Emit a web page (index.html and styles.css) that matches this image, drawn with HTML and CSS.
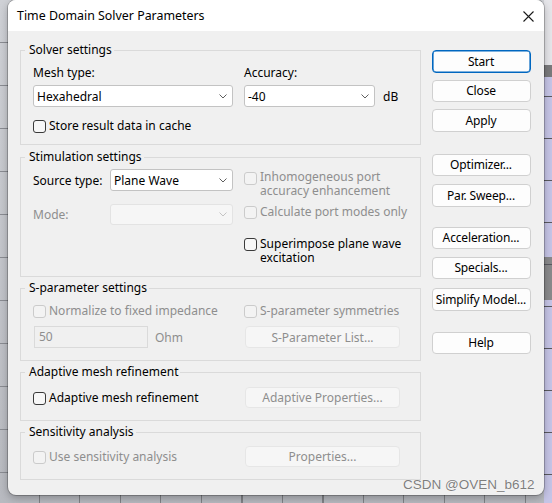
FILE: index.html
```html
<!DOCTYPE html>
<html>
<head>
<meta charset="utf-8">
<title>Time Domain Solver Parameters</title>
<link rel="stylesheet" href="styles.css">
</head>
<body>
<div class="desk">
  <div class="dialog">
    <div class="titlebar">
      <span class="title">Time Domain Solver Parameters</span>
      <svg class="close-x" width="11" height="11" viewBox="0 0 11 11"><path d="M0.5 0.5 L10.5 10.5 M10.5 0.5 L0.5 10.5" stroke="#1a1a1a" stroke-width="1.1" fill="none"/></svg>
    </div>
    <div class="body">
      <div class="groups">
        <section class="group g-solver">
          <div class="gtitle">Solver settings</div>
          <div class="row r-labels"><span class="col1">Mesh type:</span><span>Accuracy:</span></div>
          <div class="row r-combos">
            <div class="col1"><div class="combo w-mesh"><span>Hexahedral</span><svg class="chev" width="8" height="5" viewBox="0 0 8 5"><path d="M0.5 0.5 L4 4 L7.5 0.5" stroke="#5f5f5f" stroke-width="1" fill="none"/></svg></div></div>
            <div class="combo w-acc"><span>-40</span><svg class="chev" width="8" height="5" viewBox="0 0 8 5"><path d="M0.5 0.5 L4 4 L7.5 0.5" stroke="#5f5f5f" stroke-width="1" fill="none"/></svg></div>
            <span class="unit">dB</span>
          </div>
          <div class="check r-cache"><span class="box"></span><span>Store result data in cache</span></div>
        </section>

        <section class="group g-stim">
          <div class="gtitle">Stimulation settings</div>
          <div class="cols">
            <div class="col1">
              <div class="row r-src"><span class="lbl-src">Source type:</span><div class="combo w-src"><span>Plane Wave</span><svg class="chev" width="8" height="5" viewBox="0 0 8 5"><path d="M0.5 0.5 L4 4 L7.5 0.5" stroke="#5f5f5f" stroke-width="1" fill="none"/></svg></div></div>
              <div class="row r-mode"><span class="lbl-src dis">Mode:</span><div class="combo w-src combo-dis"><span></span><svg class="chev" width="8" height="5" viewBox="0 0 8 5"><path d="M0.5 0.5 L4 4 L7.5 0.5" stroke="#c4c4c4" stroke-width="1" fill="none"/></svg></div></div>
            </div>
            <div class="col2">
              <div class="check dis c-inho"><span class="box"></span><span class="lines"><span class="ln">Inhomogeneous port</span><span class="ln">accuracy enhancement</span></span></div>
              <div class="check dis c-calc"><span class="box"></span><span>Calculate port modes only</span></div>
              <div class="check c-super"><span class="box"></span><span class="lines"><span class="ln">Superimpose plane wave</span><span class="ln">excitation</span></span></div>
            </div>
          </div>
        </section>

        <section class="group g-spar">
          <div class="gtitle">S-parameter settings</div>
          <div class="row r-norm">
            <div class="col1"><div class="check dis"><span class="box"></span><span>Normalize to fixed impedance</span></div></div>
            <div class="check dis"><span class="box"></span><span>S-parameter symmetries</span></div>
          </div>
          <div class="row r-imp">
            <div class="col1 imp-cell"><div class="field">50</div><span class="dis ohm">Ohm</span></div>
            <div class="btn btn-dis">S-Parameter List...</div>
          </div>
        </section>

        <section class="group g-adapt">
          <div class="gtitle">Adaptive mesh refinement</div>
          <div class="row r-adapt">
            <div class="col1"><div class="check"><span class="box"></span><span>Adaptive mesh refinement</span></div></div>
            <div class="btn btn-dis">Adaptive Properties...</div>
          </div>
        </section>

        <section class="group g-sens">
          <div class="gtitle">Sensitivity analysis</div>
          <div class="row r-sens">
            <div class="col1"><div class="check dis"><span class="box"></span><span>Use sensitivity analysis</span></div></div>
            <div class="btn btn-dis">Properties...</div>
          </div>
        </section>
      </div>

      <div class="buttons">
        <div class="btn btn-default">Start</div>
        <div class="btn b-close">Close</div>
        <div class="btn b-apply">Apply</div>
        <div class="btn b-opt">Optimizer...</div>
        <div class="btn b-par">Par. Sweep...</div>
        <div class="btn b-acc">Acceleration...</div>
        <div class="btn b-spec">Specials...</div>
        <div class="btn b-simp">Simplify Model...</div>
        <div class="btn b-help">Help</div>
      </div>
    </div>
  </div>
  <div class="watermark">CSDN @OVEN_b612</div>
</div>
</body>
</html>
```

FILE: styles.css
```css
* { box-sizing: border-box; }
html, body { margin: 0; padding: 0; }
body {
  width: 552px;
  height: 503px;
  overflow: hidden;
  font-family: "Noto Sans", "Open Sans", sans-serif;
  font-size: 12px;
  color: #000;
  background:
    repeating-linear-gradient(to right, transparent 0 39px, #808286 39px 40px, transparent 40px 40.5px) 0 495px / 552px 8px no-repeat,
    repeating-linear-gradient(to bottom, transparent 0 42px, #8a8c92 42px 43px) 0 0 / 8px 503px no-repeat,
    repeating-linear-gradient(to bottom, transparent 0 41px, #5a5a60 41px 42px) 544px 55px / 8px 448px no-repeat,
    linear-gradient(#e6e6ea, #e6e6ea) 544px 0 / 8px 65px no-repeat,
    linear-gradient(#7a7a7c, #7a7a7c) 544px 65px / 8px 12px no-repeat,
    linear-gradient(#8a8a8c, #8a8a8c) 544px 257px / 8px 43px no-repeat,
    linear-gradient(#c6c5e7, #c6c5e7) 544px 0 / 8px 503px no-repeat,
    linear-gradient(to bottom, #cfd1d6, #b8bac0);
}
.desk {
  position: relative;
  height: 503px;
  padding-left: 8px;
}
.dialog {
  width: 536px;
  height: 495px;
  background: #f0f0f0;
  border-radius: 8px;
  overflow: hidden;
  box-shadow: 0 0 0 1px rgba(0,0,0,0.22), 0 3px 8px rgba(0,0,0,0.28);
  display: flex;
  flex-direction: column;
}
.titlebar {
  height: 31px;
  flex: none;
  background: #fff;
  display: flex;
  align-items: center;
  justify-content: space-between;
  padding: 1px 10px 0 9px;
}
.title { font-size: 12.4px; line-height: 16px; }
.close-x { display: block; }

.body {
  display: flex;
  padding: 19px 0 0 12px;
  gap: 10.5px;
}
.groups {
  width: 401px;
  flex: none;
  display: flex;
  flex-direction: column;
}
.group {
  border: 1px solid #dadada;
  padding: 0 0 0 12px;
}
.g-stim { margin-top: 12px; }
.g-spar, .g-adapt, .g-sens { margin-top: 11px; }

.gtitle {
  width: fit-content;
  height: 16px;
  line-height: 16px;
  margin: -9px 0 0 -8px;
  padding: 0 2px 0 4px;
  background: #f0f0f0;
}

.row { display: flex; align-items: center; }
.col1 { width: 211px; flex: none; }
.dis { color: #8e8e8e; }

/* checkbox */
.check { display: flex; align-items: flex-start; line-height: 14px; }
.check .box {
  flex: none;
  width: 13px;
  height: 13px;
  margin: 1px 3px 0 0;
  border: 1px solid #3a3a3a;
  border-radius: 3px;
  background: #f7f7f7;
}
.check.dis { color: #8e8e8e; }
.check.dis .box { border-color: #cbcbcb; background: #f3f3f3; }
.lines { display: flex; flex-direction: column; }
.ln { display: block; height: 14px; }

/* combo */
.combo {
  height: 22px;
  background: #fff;
  border: 1px solid #c3c3c3;
  border-radius: 3px;
  display: flex;
  align-items: center;
  justify-content: space-between;
  padding: 0 5px 0 3px;
}
.chev { display: block; }
.combo-dis { background: #f6f6f6; border-color: #e3e3e3; }
.w-mesh { width: 200px; }
.w-acc { width: 131px; }
.unit { margin-left: 8px; }

/* solver */
.r-labels { margin-top: 6.5px; height: 16px; line-height: 16px; }
.r-combos { margin-top: 4.5px; height: 22px; }
.r-cache { margin-top: 11.5px; height: 14px; }
.g-solver { padding-bottom: 11.5px; }

/* stimulation */
.cols { display: flex; }
.lbl-src { width: 77px; flex: none; }
.w-src { width: 123px; }
.r-src { margin-top: 4px; height: 22px; }
.r-mode { margin-top: 13px; height: 20.5px; }
.r-mode .combo { height: 20.5px; }
.c-inho { margin-top: 4.5px; }
.c-inho .box { margin-top: 2px; }
.c-calc { margin-top: 7.5px; }
.c-super { margin-top: 17.5px; }
.c-super .box { margin-top: 1.5px; }
.g-stim { padding-bottom: 11.5px; }

/* s-parameter */
.r-norm { margin-top: 7.5px; height: 14px; }
.r-imp { margin-top: 8.5px; height: 22px; }
.imp-cell { display: flex; align-items: center; }
.field {
  width: 114px;
  height: 22px;
  margin-left: 1px;
  border: 1px solid #dadada;
  background: #f0f0f0;
  color: #8e8e8e;
  line-height: 20px;
  padding-left: 4px;
}
.ohm { margin-left: 7px; }
.g-spar { padding-bottom: 12px; }

/* adaptive / sensitivity */
.r-adapt { margin-top: 6.5px; height: 22px; }
.g-adapt { padding-bottom: 11.5px; }
.r-sens { margin-top: 5.5px; height: 22px; }
.g-sens { padding-bottom: 11.5px; }

/* buttons */
.btn {
  height: 22.5px;
  display: flex;
  align-items: center;
  justify-content: center;
  background: #fdfdfd;
  border: 1px solid #d0d0d0;
  border-radius: 4px;
}
.btn-dis {
  width: 155px;
  height: 21.5px;
  margin-left: 1px;
  background: #f6f6f6;
  border-color: #e6e6e6;
  color: #8e8e8e;
}
.buttons {
  width: 99px;
  flex: none;
  display: flex;
  flex-direction: column;
}
.buttons .btn { letter-spacing: -0.15px; }
.btn-default {
  border-color: #0067c0;
  box-shadow: inset 0 0 0 0.6px #0067c0;
}
.b-close { margin-top: 7px; }
.b-apply { margin-top: 7px; }
.b-opt { margin-top: 22px; }
.b-par { margin-top: 8px; }
.b-acc { margin-top: 20px; }
.b-spec { margin-top: 7.5px; }
.b-simp { margin-top: 9px; }
.b-help { margin-top: 21px; }

.watermark {
  position: absolute;
  left: 403px;
  top: 477px;
  font-family: "Liberation Sans", Arial, sans-serif;
  font-size: 13.5px;
  line-height: 16px;
  color: #7e7e7e;
  text-shadow: 0 0 1px #fff, 0 0 1px #fff;
}
```
